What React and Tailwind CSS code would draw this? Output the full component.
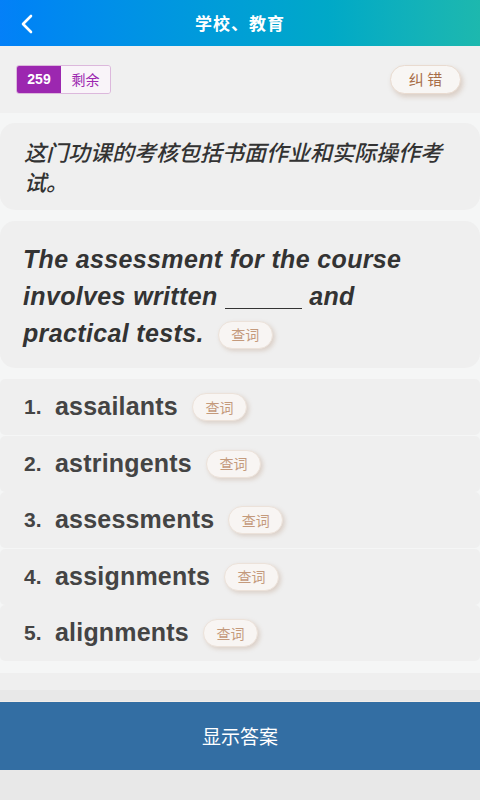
import React from "react";

const options = ["assailants", "astringents", "assessments", "assignments", "alignments"];

function LookupPill({ className = "" }) {
  return (
    <span
      className={
        "inline-flex h-[28px] w-[55px] items-center justify-center rounded-full border border-[#ece2da] bg-[#f8f5f3] text-[14px] font-normal tracking-normal text-[#c49a7c] shadow-[2px_2px_4px_rgba(170,130,100,0.28)] " +
        className
      }
      style={{ fontFamily: '"Noto Sans CJK SC", sans-serif', fontStyle: "normal" }}
    >
      查词
    </span>
  );
}

export default function App() {
  return (
    <div
      className="flex h-[800px] w-[480px] flex-col bg-[#e8e8e8]"
      style={{ fontFamily: '"Liberation Sans", "Noto Sans CJK SC", sans-serif' }}
    >
      {/* Header */}
      <div className="relative flex h-[46px] items-center justify-center bg-linear-to-r from-[#0480f8] to-[#1db8ae]">
        <button className="absolute left-[18px] top-[12px] p-[2px]">
          <svg width="14" height="20" viewBox="0 0 14 20" fill="none">
            <path d="M11 2 L3 10 L11 18" stroke="white" strokeWidth="2.6" strokeLinecap="round" strokeLinejoin="round" />
          </svg>
        </button>
        <h1
          className="text-[17px] font-bold tracking-[1px] text-white"
          style={{ fontFamily: '"Noto Sans CJK SC", sans-serif' }}
        >
          学校、教育
        </h1>
      </div>

      {/* Toolbar */}
      <div className="flex h-[67px] items-center justify-between bg-[#f0f0f0] pl-[16px] pr-[19px]">
        <div className="flex h-[29px] overflow-hidden rounded-[3px] border border-[#dcb8dc]">
          <span className="flex w-[44px] items-center justify-center bg-[#9c27b0] text-[14px] font-bold text-white">259</span>
          <span
            className="flex w-[49px] items-center justify-center bg-[#f9f4f9] text-[14px] text-[#9c27b0]"
            style={{ fontFamily: '"Noto Sans CJK SC", sans-serif' }}
          >
            剩余
          </span>
        </div>
        <button
          className="flex h-[29px] w-[71px] items-center justify-center rounded-full border border-[#e9dbd0] bg-[#f8f6f4] text-[15px] text-[#a86e48] shadow-[2px_3px_5px_rgba(170,130,100,0.3)]"
          style={{ fontFamily: '"Noto Sans CJK SC", sans-serif' }}
        >
          纠 错
        </button>
      </div>

      {/* Content */}
      <div className="flex flex-col bg-[#f5f6f6] pt-[10px]">
        <div className="rounded-[15px] bg-[#efefef] pb-[14px] pl-[24px] pr-[22px] pt-[13px]">
          <p
            className="text-[22px] font-medium italic leading-[30px] text-[#333]"
            style={{ fontFamily: '"Noto Sans CJK SC", sans-serif' }}
          >
            这门功课的考核包括书面作业和实际操作考试。
          </p>
        </div>

        <div className="mt-[11px] rounded-[15px] bg-[#efefef] pb-[16px] pl-[23px] pr-[40px] pt-[20px]">
          <p className="text-[25px] font-bold italic leading-[37px] tracking-[0.35px] text-[#333]">
            The assessment for the course involves written{" "}
            <span className="inline-block w-[77px] border-b-[1.5px] border-[#333] align-[-4px]"></span> and practical tests.
            <LookupPill className="ml-[14px] align-[2px]" />
          </p>
        </div>

        <div className="mt-[11px] flex flex-col gap-[0.5px]">
          {options.map((word, i) => (
            <div key={word} className="flex h-[56px] items-center rounded-[5px] bg-[#efefef] pl-[24px]">
              <span className="w-[31px] text-[21px] font-bold text-[#444]">{i + 1}.</span>
              <span className="text-[25px] font-bold tracking-[0.2px] text-[#444]">{word}</span>
              <LookupPill className="ml-[14px]" />
            </div>
          ))}
        </div>

        <div className="mt-[12px] h-[17px] bg-[#efefef]"></div>
      </div>

      <div className="h-[11px] bg-[#e8e8e8]"></div>
      <div className="h-px bg-[#f3ede8]"></div>

      {/* Bottom button */}
      <button
        className="flex h-[68px] items-center justify-center bg-[#336ea3] text-[19px] text-white"
        style={{ fontFamily: '"Noto Sans CJK SC", sans-serif' }}
      >
        显示答案
      </button>
      <div className="flex-1 bg-[#e8e8e8]"></div>
    </div>
  );
}
